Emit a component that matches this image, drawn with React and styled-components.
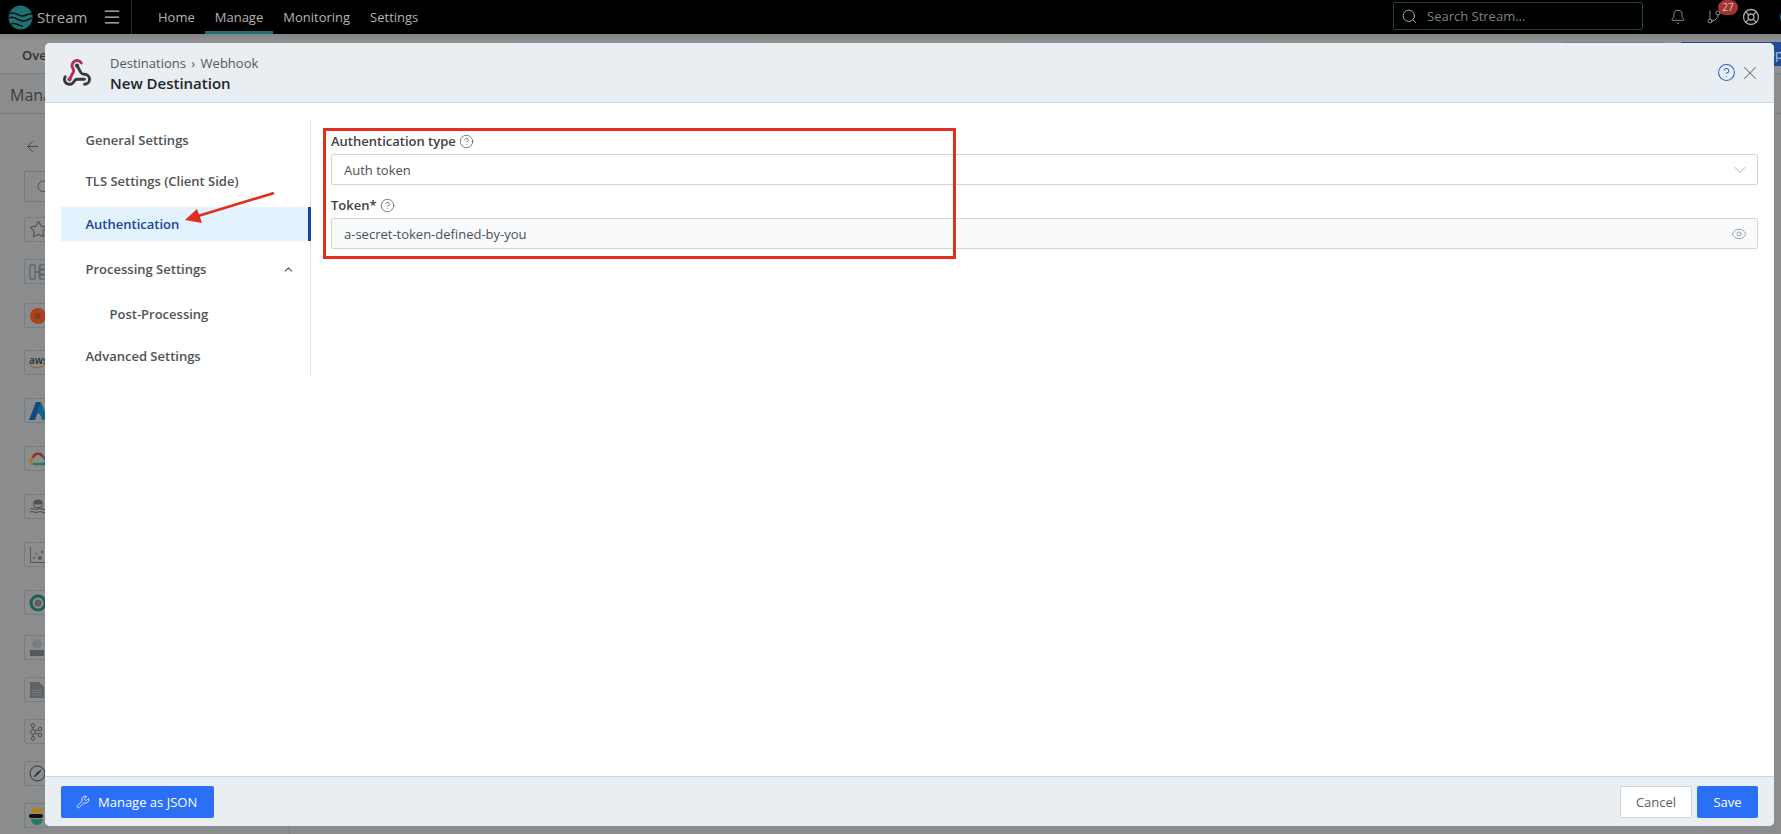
import React from "react";
import styled, { createGlobalStyle } from "styled-components";
import {
  ArrowLeft,
  Bell,
  ChevronDown,
  ChevronUp,
  CircleHelp,
  Eye,
  GitBranch,
  LifeBuoy,
  Menu,
  Search,
  Star,
  Wrench,
  X,
} from "lucide-react";

const GlobalStyle = createGlobalStyle`
  html, body {
    margin: 0;
    padding: 0;
    background: #8b8c8d;
    font-family: "Open Sans", "Liberation Sans", sans-serif;
    overflow: hidden;
  }
  * { box-sizing: border-box; }
`;

const navItems = [
  { label: "General Settings", height: 38, top: 0 },
  { label: "TLS Settings (Client Side)", height: 38, top: 3 },
  { label: "Authentication", height: 34, top: 7, active: true },
  { label: "Processing Settings", height: 38, top: 9, open: true },
  { label: "Post-Processing", height: 38, top: 7, nested: true },
  { label: "Advanced Settings", height: 38, top: 4 },
];

const railIcons = [
  { id: "star", top: 15 },
  { id: "flow", top: 17 },
  { id: "confluent", top: 19 },
  { id: "aws", top: 22 },
  { id: "azure", top: 23 },
  { id: "gcloud", top: 23 },
  { id: "lake", top: 23 },
  { id: "scatter", top: 23 },
  { id: "ring", top: 23 },
  { id: "json", top: 20 },
  { id: "doc", top: 17 },
  { id: "kafka", top: 17 },
  { id: "compass", top: 17 },
  { id: "elastic", top: 17 },
];

const RailIcon = ({ id }) => {
  if (id === "star") return <Star size={19} strokeWidth={1.3} color="#4a4d50" />;
  if (id === "flow")
    return (
      <svg width="18" height="18" viewBox="0 0 18 18" fill="none" stroke="#4d5b68" strokeWidth="1">
        <rect x="1" y="2" width="5" height="14" />
        <path d="M6 9h4M10 4v10" />
        <rect x="11" y="2" width="6" height="4" />
        <rect x="11" y="7" width="6" height="4" />
        <rect x="11" y="12" width="6" height="4" />
      </svg>
    );
  if (id === "confluent")
    return (
      <svg width="18" height="18" viewBox="0 0 18 18">
        <circle cx="9" cy="9" r="8" fill="#a8431f" />
        <circle cx="9" cy="9" r="3" fill="#8f3a20" />
      </svg>
    );
  if (id === "aws")
    return (
      <AwsMark>
        aws
        <svg width="16" height="4" viewBox="0 0 16 4" fill="none">
          <path d="M1 0.5c4 3 9 3 14 0" stroke="#9a6a18" strokeWidth="1.2" />
        </svg>
      </AwsMark>
    );
  if (id === "azure")
    return (
      <svg width="20" height="18" viewBox="0 0 20 18">
        <path d="M7 0h5l-6 18H0z" fill="#0d4a80" />
        <path d="M12 0l7 18h-6l-2-6-3 0z" fill="#14608f" />
      </svg>
    );
  if (id === "gcloud")
    return (
      <svg width="18" height="14" viewBox="0 0 18 14" fill="none" strokeWidth="2.4">
        <path d="M4 12C1 12 1 7 4 6" stroke="#a37a20" />
        <path d="M4 6c1-5 8-6 10-1" stroke="#8e3328" />
        <path d="M14 5c4 1 4 7 0 7" stroke="#2a5a9e" />
        <path d="M4 12h10" stroke="#2f7a45" />
      </svg>
    );
  if (id === "lake")
    return (
      <svg width="18" height="16" viewBox="0 0 18 16" fill="none" stroke="#4f5152" strokeWidth="1.1">
        <ellipse cx="9" cy="3" rx="4" ry="2" fill="#4f5152" />
        <path d="M5 3v4c0 2 8 2 8 0V3M1 10c3-2 5 2 8 0s5 2 8 0M1 13c3-2 5 2 8 0s5 2 8 0" />
      </svg>
    );
  if (id === "scatter")
    return (
      <svg width="18" height="16" viewBox="0 0 18 16" fill="#54585c" stroke="none">
        <path d="M1 0h1v15h16v1H1z" />
        <circle cx="5" cy="11" r="1" />
        <circle cx="11" cy="11" r="2" />
        <circle cx="13" cy="5" r="1.2" />
        <circle cx="7" cy="7" r="0.8" />
      </svg>
    );
  if (id === "ring")
    return (
      <svg width="18" height="18" viewBox="0 0 18 18" fill="none">
        <circle cx="9" cy="9" r="7" stroke="#1f5f5a" strokeWidth="3" />
        <circle cx="9" cy="9" r="3.5" fill="#5a5f60" />
      </svg>
    );
  if (id === "json")
    return (
      <svg width="16" height="18" viewBox="0 0 16 18" fill="#676a6c">
        <circle cx="8" cy="5" r="5" fill="#7a7d7f" />
        <rect x="1" y="11" width="14" height="6" fill="#55585a" />
      </svg>
    );
  if (id === "doc")
    return (
      <svg width="16" height="18" viewBox="0 0 16 18">
        <path d="M1 1h9l5 5v11H1z" fill="#606366" />
        <path d="M3 9h10M3 11.5h10M3 14h10" stroke="#828486" strokeWidth="0.8" />
      </svg>
    );
  if (id === "kafka")
    return (
      <svg width="14" height="18" viewBox="0 0 14 18" fill="none" stroke="#4a4d50" strokeWidth="1">
        <circle cx="4" cy="2.5" r="1.8" />
        <circle cx="4" cy="9" r="2.4" />
        <circle cx="4" cy="15.5" r="1.8" />
        <circle cx="11" cy="6" r="1.8" />
        <circle cx="11" cy="12" r="1.8" />
        <path d="M4 4.3v2.3M4 11.4v2.3M6 8l3.4-1.2M6 10l3.4 1.2" />
      </svg>
    );
  if (id === "compass")
    return (
      <svg width="17" height="17" viewBox="0 0 17 17" fill="none" stroke="#2d3033" strokeWidth="1">
        <circle cx="8.5" cy="8.5" r="7.5" />
        <path d="M12 5L9 9 5 12l3-4z" fill="#2d3033" />
      </svg>
    );
  return (
    <svg width="16" height="18" viewBox="0 0 16 18">
      <path d="M2 6a6 6 0 0 1 12 0z" fill="#a8841d" />
      <rect x="0" y="7" width="14" height="4" rx="2" fill="#111" />
      <path d="M2 12h12a6 6 0 0 1-12 0z" fill="#1f7a6a" />
    </svg>
  );
};

const WebhookIcon = () => (
  <svg width="30" height="30" viewBox="0 0 24 24" fill="none" strokeWidth="2.3" strokeLinecap="round" strokeLinejoin="round">
    <path d="M18 16.98h-5.99c-1.1 0-1.95.94-2.48 1.9A4 4 0 0 1 2 17c.01-.7.2-1.4.57-2" stroke="#343a40" />
    <path d="m6 17 3.13-5.78c.53-.97.1-2.18-.5-3.1a4 4 0 1 1 6.89-4.06" stroke="#b32d5c" />
    <path d="m12 6 3.13 5.73C15.66 12.7 16.9 13 18 13a4 4 0 0 1 0 8" stroke="#343a40" />
    <circle cx="12" cy="6" r="1.7" fill="#343a40" />
    <circle cx="6" cy="17" r="1.7" fill="#b32d5c" />
  </svg>
);

const Logo = () => (
  <svg width="25" height="25" viewBox="0 0 25 25">
    <circle cx="12.5" cy="12.5" r="12" fill="#1f7073" />
    <path
      d="M1 9c6-4 9 3 14 2s6-3 9-2M0.8 13c6-3 9 3 14 3s6-2 9-3M3 19c4-2 8 2 12 2"
      fill="none"
      stroke="#0b0f10"
      strokeWidth="1.5"
    />
  </svg>
);

const App = () => (
  <Page>
    <GlobalStyle />
    <TopBar>
      <Brand>
        <Logo />
        <BrandName>Stream</BrandName>
        <Burger>
          <Menu size={20} strokeWidth={1.5} color="#c8c8c8" />
        </Burger>
      </Brand>
      <TopNav>
        <TopLink>Home</TopLink>
        <TopLink $active>Manage</TopLink>
        <TopLink>Monitoring</TopLink>
        <TopLink>Settings</TopLink>
      </TopNav>
      <SearchBox>
        <Search size={17} strokeWidth={1.3} color="#b5b5b5" />
        <span>Search Stream...</span>
      </SearchBox>
      <TopIcons>
        <Bell size={16} strokeWidth={1.2} color="#b0b0b0" />
        <BranchWrap>
          <GitBranch size={16} strokeWidth={1.2} color="#b0b0b0" />
          <Badge>27</Badge>
        </BranchWrap>
        <LifeBuoy size={18} strokeWidth={1.7} color="#a8a8a8" />
        <Avatar />
      </TopIcons>
    </TopBar>
    <SubBar>Overview</SubBar>
    <TitleRow>Manage</TitleRow>
    <Content>
      <Rail>
        <BackArrow>
          <ArrowLeft size={17} strokeWidth={1.3} color="#3f4245" />
        </BackArrow>
        <RailSearch>
          <Search size={16} strokeWidth={1.4} color="#4a4d50" />
        </RailSearch>
        {railIcons.map((r) => (
          <RailBox key={r.id} $top={r.top}>
            <RailIcon id={r.id} />
          </RailBox>
        ))}
      </Rail>
    </Content>
    <GhostButton />
    <CornerButton>Open</CornerButton>

    <Modal>
      <ModalHeader>
        <WebhookIcon />
        <Titles>
          <Crumbs>
            Destinations <Sep>›</Sep> Webhook
          </Crumbs>
          <ModalTitle>New Destination</ModalTitle>
        </Titles>
        <HeaderTools>
          <CircleHelp size={19} strokeWidth={1.3} color="#2a62c9" />
          <X size={22} strokeWidth={1.1} color="#6c7176" />
        </HeaderTools>
      </ModalHeader>
      <ModalBody>
        <Side>
          {navItems.map((item) => (
            <NavItem
              key={item.label}
              $h={item.height}
              $top={item.top}
              $active={item.active}
              $nested={item.nested}
            >
              {item.label}
              {item.open && <ChevronUp size={13} strokeWidth={2} color="#4a4f54" />}
            </NavItem>
          ))}
        </Side>
        <Form>
          <Field>
            <Label>
              Authentication type <CircleHelp size={15} strokeWidth={1.1} color="#41474d" />
            </Label>
            <Control>
              Auth token
              <ChevronDown size={20} strokeWidth={1} color="#9aa1a8" />
            </Control>
          </Field>
          <Field>
            <Label>
              Token* <CircleHelp size={15} strokeWidth={1.1} color="#41474d" />
            </Label>
            <Control $filled>
              a-secret-token-defined-by-you
              <Eye size={16} strokeWidth={1.1} color="#7d8489" />
            </Control>
          </Field>
          <RedBox />
        </Form>
        <Arrow viewBox="0 0 96 34" width="96" height="34">
          <path d="M94 2 L18 25" stroke="#e22d1f" strokeWidth="2.6" fill="none" />
          <path d="M5 29 L17 18 L22 32 Z" fill="#e22d1f" />
        </Arrow>
      </ModalBody>
      <ModalFooter>
        <PrimaryButton>
          <Wrench size={14} strokeWidth={1.4} />
          Manage as JSON
        </PrimaryButton>
        <FooterRight>
          <CancelButton>Cancel</CancelButton>
          <SaveButton>Save</SaveButton>
        </FooterRight>
      </ModalFooter>
    </Modal>
  </Page>
);

export default App;

const Page = styled.div`
  position: relative;
  width: 1781px;
  height: 834px;
  overflow: hidden;
  background: #8b8c8d;
  color: #333;
`;

const TopBar = styled.header`
  display: flex;
  align-items: stretch;
  height: 34px;
  background: #000;
`;

const Brand = styled.div`
  display: flex;
  align-items: center;
  width: 132px;
  padding-left: 8px;
  border-right: 1px solid #2b2b2b;
`;

const BrandName = styled.span`
  margin-left: 4px;
  font-size: 15px;
  color: #a9adad;
`;

const Burger = styled.span`
  display: flex;
  margin-left: 15px;
`;

const TopNav = styled.nav`
  display: flex;
  margin-left: 26px;
  gap: 20px;
  flex: 1;
`;

const TopLink = styled.a`
  display: flex;
  align-items: center;
  padding: 3px 10px 0;
  margin: 0 -10px;
  height: 34px;
  font-size: 13px;
  color: #b4b4b4;
  border-bottom: 3px solid ${(p) => (p.$active ? "#1f7073" : "transparent")};
`;

const SearchBox = styled.div`
  display: flex;
  align-items: center;
  gap: 9px;
  flex: none;
  width: 250px;
  height: 28px;
  margin-top: 2px;
  padding-left: 7px;
  border: 1px solid #26403f;
  border-radius: 2px;
  font-size: 13px;
  color: #7e8080;
`;

const TopIcons = styled.div`
  display: flex;
  align-items: center;
  flex: none;
  width: 138px;
  padding-left: 27px;
  gap: 20px;
  svg {
    flex: none;
  }
`;

const BranchWrap = styled.span`
  position: relative;
  display: flex;
  flex: none;
`;

const Badge = styled.span`
  position: absolute;
  left: 12px;
  top: -9px;
  width: 20px;
  height: 15px;
  border-radius: 8px;
  background: #a5332f;
  color: #cfc4c4;
  font-size: 10px;
  line-height: 15px;
  text-align: center;
`;

const Avatar = styled.span`
  width: 18px;
  height: 18px;
  border-radius: 50%;
  background: #1f7073;
  flex: none;
`;

const SubBar = styled.div`
  height: 40px;
  padding: 12px 0 0 22px;
  font-size: 13px;
  font-weight: 600;
  color: #2f3133;
  background: linear-gradient(#858585, #909192 20%);
  border-bottom: 1px solid #7a7b7c;
`;

const TitleRow = styled.div`
  height: 40px;
  padding: 10px 0 0 10px;
  font-size: 16px;
  color: #3a3d40;
  border-bottom: 1px solid #7a7b7c;
`;

const Content = styled.div`
  display: flex;
  height: 721px;
`;

const Rail = styled.aside`
  display: flex;
  flex-direction: column;
  width: 290px;
  padding-left: 24px;
  border-right: 1px solid #7d7e7f;
`;

const BackArrow = styled.div`
  display: flex;
  align-items: center;
  height: 16px;
  margin-top: 24px;
`;

const RailSearch = styled.div`
  display: flex;
  align-items: center;
  width: 120px;
  height: 31px;
  margin-top: 17px;
  padding-left: 11px;
  border: 1px solid #77787a;
  border-radius: 2px;
`;

const RailBox = styled.div`
  display: flex;
  align-items: center;
  justify-content: flex-start;
  flex: none;
  width: 25px;
  height: 25px;
  margin-top: ${(p) => p.$top}px;
  padding-left: 4px;
  border: 1px solid #7b7c7e;
  border-radius: 2px;
  svg {
    flex: none;
  }
`;

const AwsMark = styled.span`
  display: flex;
  flex-direction: column;
  font-size: 10px;
  line-height: 9px;
  color: #2a2c2e;
  font-weight: 600;
`;

const GhostButton = styled.div`
  position: absolute;
  top: 42px;
  left: 1562px;
  width: 103px;
  height: 3px;
  background: #7d7e80;
`;

const CornerButton = styled.div`
  position: absolute;
  top: 42px;
  right: 0;
  width: 100px;
  height: 24px;
  padding: 3px 0 0 84px;
  background: #1f4a9e;
  color: #b8c4dc;
  font-size: 13px;
  white-space: nowrap;
  overflow: hidden;
`;

const Modal = styled.section`
  position: absolute;
  top: 43px;
  left: 45px;
  width: 1729px;
  height: 783px;
  display: flex;
  flex-direction: column;
  background: #fff;
  border-radius: 5px;
  overflow: hidden;
`;

const ModalHeader = styled.div`
  display: flex;
  align-items: center;
  flex: none;
  height: 60px;
  padding: 0 13px 0 17px;
  background: #e9eef2;
  border-bottom: 1px solid #cfd5da;
`;

const Titles = styled.div`
  margin-left: 18px;
  flex: 1;
`;

const Crumbs = styled.div`
  padding-top: 1px;
  font-size: 13px;
  line-height: 19px;
  color: #53585d;
`;

const Sep = styled.span`
  margin: 0 2px;
`;

const ModalTitle = styled.div`
  font-size: 15px;
  line-height: 20px;
  font-weight: 600;
  color: #212529;
`;

const HeaderTools = styled.div`
  display: flex;
  align-items: center;
  gap: 3px;
`;

const ModalBody = styled.div`
  position: relative;
  display: flex;
  flex: 1;
  padding: 16px 16px 0;
  align-items: flex-start;
`;

const Side = styled.nav`
  width: 250px;
  flex: none;
  padding-top: 2px;
  height: 258px;
  border-right: 1px solid #dee2e6;
`;

const NavItem = styled.div`
  display: flex;
  align-items: center;
  justify-content: space-between;
  height: ${(p) => p.$h}px;
  margin-top: ${(p) => p.$top}px;
  margin-right: ${(p) => (p.$active ? "-1px" : "0")};
  padding-left: ${(p) => (p.$nested ? 48.5 : 24.5)}px;
  padding-right: 12px;
  font-size: 13px;
  font-weight: 600;
  color: ${(p) => (p.$active ? "#17449b" : "#4e5358")};
  background: ${(p) => (p.$active ? "#e3f3fd" : "transparent")};
  border-right: 3px solid ${(p) => (p.$active ? "#17449b" : "transparent")};
`;

const Form = styled.div`
  position: relative;
  flex: 1;
  padding: 12px 0 0 20px;
`;

const Field = styled.div`
  margin-bottom: 10px;
`;

const Label = styled.label`
  display: flex;
  align-items: center;
  gap: 3px;
  height: 23px;
  padding-bottom: 3px;
  font-size: 13px;
  font-weight: 600;
  color: #3d4247;
`;

const Control = styled.div`
  display: flex;
  align-items: center;
  justify-content: space-between;
  height: 31px;
  padding: 0 ${(p) => (p.$filled ? 10 : 7)}px 0 12px;
  font-size: 13px;
  color: #495057;
  background: ${(p) => (p.$filled ? "#f8fafc" : "#fff")};
  border: 1px solid #ced4da;
  border-radius: 2px;
`;

const RedBox = styled.div`
  position: absolute;
  top: 9px;
  left: 12px;
  width: 633px;
  height: 131px;
  border: 3px solid #e22d1f;
  pointer-events: none;
`;

const Arrow = styled.svg`
  position: absolute;
  left: 135px;
  top: 88px;
`;

const ModalFooter = styled.div`
  display: flex;
  align-items: center;
  justify-content: space-between;
  flex: none;
  height: 50px;
  padding: 0 16px;
  background: #e9eef2;
  border-top: 1px solid #cfd5da;
`;

const FooterRight = styled.div`
  display: flex;
  gap: 5px;
`;

const PrimaryButton = styled.button`
  display: flex;
  align-items: center;
  gap: 8px;
  width: 153px;
  height: 32px;
  padding: 0 0 0 15px;
  font: 500 13px "Open Sans", sans-serif;
  color: #fff;
  background: #2a6ff5;
  border: none;
  border-radius: 2px;
`;

const CancelButton = styled.button`
  width: 72px;
  height: 32px;
  font: 400 13px "Open Sans", sans-serif;
  color: #5a5f64;
  background: #fff;
  border: 1px solid #ced4da;
  border-radius: 2px;
`;

const SaveButton = styled.button`
  width: 61px;
  height: 32px;
  font: 500 13px "Open Sans", sans-serif;
  color: #fff;
  background: #2a6ff5;
  border: none;
  border-radius: 2px;
`;
